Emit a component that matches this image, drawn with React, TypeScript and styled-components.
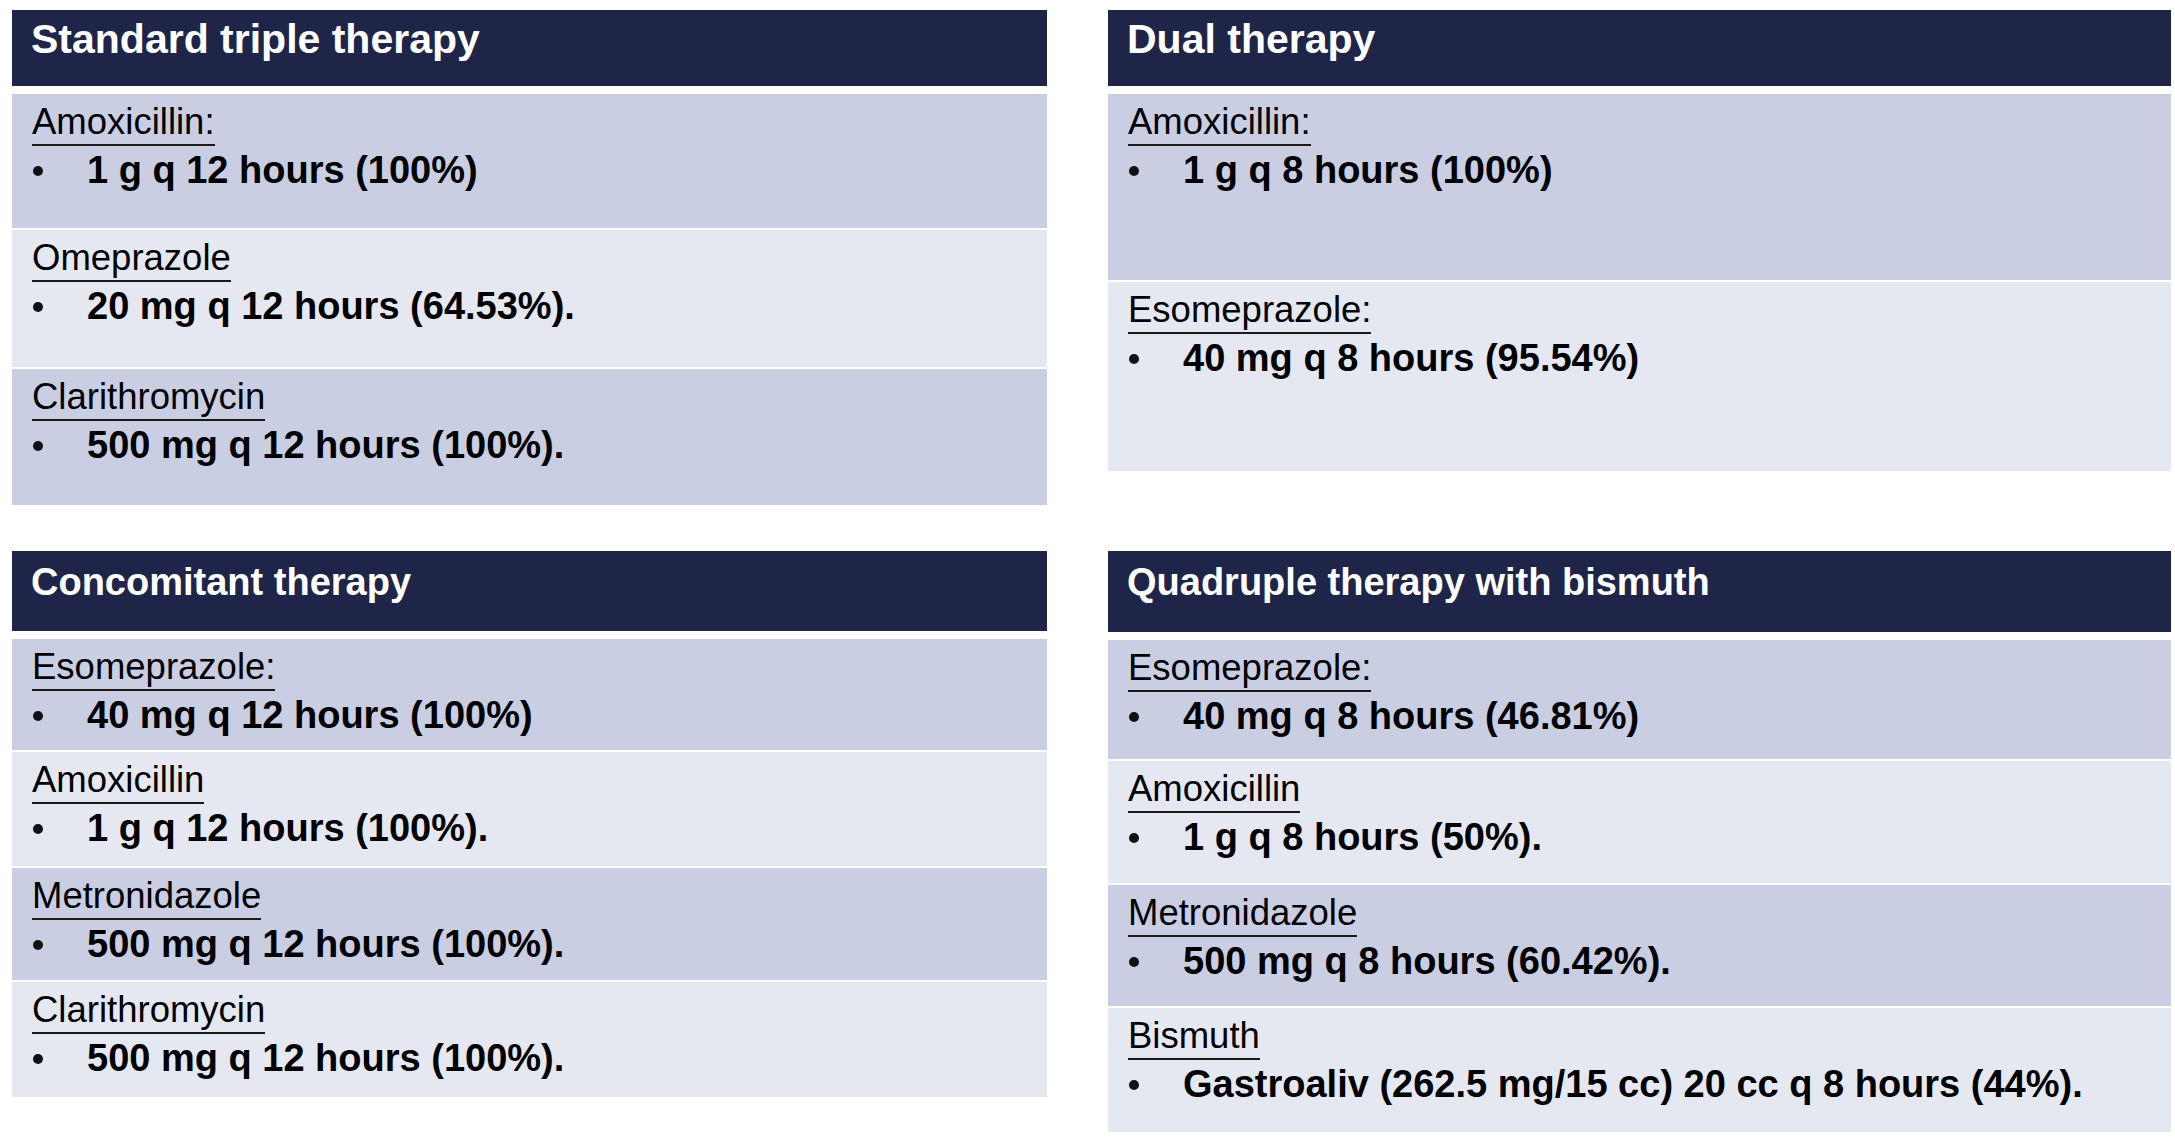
import React from 'react';
import styled, { createGlobalStyle } from 'styled-components';

const GlobalStyle = createGlobalStyle`
  body {
    margin: 0;
    background: #ffffff;
    font-family: "Liberation Sans", Arial, Helvetica, sans-serif;
  }
`;

const Page = styled.div`
  display: grid;
  grid-template-columns: 1035px 1063px;
  column-gap: 61px;
  row-gap: 46px;
  align-items: start;
  padding: 10px 0 0 12px;
`;

const Panel = styled.section`
  display: flex;
  flex-direction: column;
  gap: 2px;
`;

const Header = styled.div<{ $height: number; $size: number }>`
  height: ${(p) => p.$height}px;
  box-sizing: border-box;
  margin-bottom: 6px;
  padding: ${(p) => 44 - Math.round(p.$size * 0.8465)}px 0 0 19px;
  background: #1f2548;
  color: #ffffff;
  font-size: ${(p) => p.$size}px;
  font-weight: 700;
  line-height: 1;
`;

const Row = styled.div<{ $height: number; $dark: boolean }>`
  height: ${(p) => p.$height}px;
  box-sizing: border-box;
  display: flex;
  flex-direction: column;
  align-items: flex-start;
  padding: 10px 0 0 20px;
  background: ${(p) => (p.$dark ? '#c9cee2' : '#e5e8f1')};
  color: #000000;
`;

const DrugName = styled.span`
  display: inline-block;
  font-size: 36.5px;
  line-height: 36px;
  padding-bottom: 4px;
  border-bottom: 2px solid #1a1a1a;
`;

const Dose = styled.div`
  display: flex;
  align-items: flex-start;
  margin-top: 2px;
  font-size: 38px;
  font-weight: 700;
  line-height: 44px;
  white-space: nowrap;
`;

const Dot = styled.span`
  flex: none;
  width: 10px;
  height: 10px;
  margin: 18px 44px 0 1px;
  border-radius: 50%;
  background: #111111;
`;

type Regimen = {
  title: string;
  size: number;
  header: number;
  rows: { name: string; dose: string; h: number }[];
};

const regimens: Regimen[] = [
  {
    title: 'Standard triple therapy',
    size: 41,
    header: 76,
    rows: [
      { name: 'Amoxicillin:', dose: '1 g q 12 hours (100%)', h: 134 },
      { name: 'Omeprazole', dose: '20 mg q 12 hours (64.53%).', h: 137 },
      { name: 'Clarithromycin', dose: '500 mg q 12 hours (100%).', h: 136 },
    ],
  },
  {
    title: 'Dual therapy',
    size: 41,
    header: 76,
    rows: [
      { name: 'Amoxicillin:', dose: '1 g q 8 hours (100%)', h: 186 },
      { name: 'Esomeprazole:', dose: '40 mg q 8 hours (95.54%)', h: 189 },
    ],
  },
  {
    title: 'Concomitant therapy',
    size: 38,
    header: 80,
    rows: [
      { name: 'Esomeprazole:', dose: '40 mg q 12 hours (100%)', h: 111 },
      { name: 'Amoxicillin', dose: '1 g q 12 hours (100%).', h: 114 },
      { name: 'Metronidazole', dose: '500 mg q 12 hours (100%).', h: 112 },
      { name: 'Clarithromycin', dose: '500 mg q 12 hours (100%).', h: 115 },
    ],
  },
  {
    title: 'Quadruple therapy with bismuth',
    size: 38,
    header: 81,
    rows: [
      { name: 'Esomeprazole:', dose: '40 mg q 8 hours (46.81%)', h: 119 },
      { name: 'Amoxicillin', dose: '1 g q 8 hours (50%).', h: 122 },
      { name: 'Metronidazole', dose: '500 mg q 8 hours (60.42%).', h: 121 },
      {
        name: 'Bismuth',
        dose: 'Gastroaliv (262.5 mg/15 cc) 20 cc q 8 hours (44%).',
        h: 124,
      },
    ],
  },
];

const App: React.FC = () => {
  return (
    <>
      <GlobalStyle />
      <Page>
        {regimens.map((r) => (
          <Panel key={r.title}>
            <Header $height={r.header} $size={r.size}>
              {r.title}
            </Header>
            {r.rows.map((row, i) => (
              <Row key={row.name + i} $height={row.h} $dark={i % 2 === 0}>
                <DrugName>{row.name}</DrugName>
                <Dose>
                  <Dot />
                  {row.dose}
                </Dose>
              </Row>
            ))}
          </Panel>
        ))}
      </Page>
    </>
  );
};

export default App;
